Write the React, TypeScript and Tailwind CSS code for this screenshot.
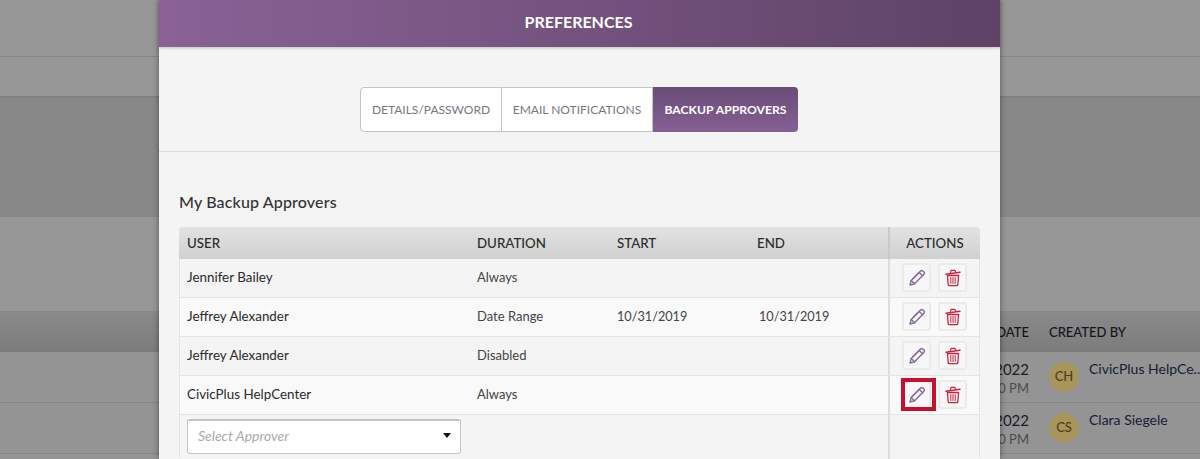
import React from "react";

const rows = [
  { user: "Jennifer Bailey", duration: "Always", start: "", end: "", bg: "bg-[#f4f4f4]" },
  { user: "Jeffrey Alexander", duration: "Date Range", start: "10/31/2019", end: "10/31/2019", bg: "bg-[#f9f9f9]" },
  { user: "Jeffrey Alexander", duration: "Disabled", start: "", end: "", bg: "bg-[#f4f4f4]" },
  { user: "CivicPlus HelpCenter", duration: "Always", start: "", end: "", bg: "bg-[#f9f9f9]", highlight: true },
];

const PencilIcon = () => (
  <svg width="18" height="18" viewBox="0 0 18 18" fill="none" stroke="#8a6a9c" strokeWidth="1.4" strokeLinejoin="round" strokeLinecap="round">
    <path d="M2 16l1.2-4.6L12.6 2c.7-.7 1.6-.7 2.2-.1l1.2 1.2c.6.6.6 1.5-.1 2.2L6.6 14.8z" />
    <path d="M3.2 11.4l3.4 3.4M11.2 3.4l3.4 3.4M4.6 10l6.8-6.8" />
  </svg>
);

const TrashIcon = () => (
  <svg width="18" height="18" viewBox="0 0 18 18" fill="none" stroke="#c9233f" strokeLinecap="round" strokeLinejoin="round">
    <path d="M2 5.2L16 3.2" strokeWidth="1.6" />
    <path d="M6.5 3.4L7.2 1.3h3.4l1 1.2" strokeWidth="1.2" />
    <path d="M3.4 6.5h11.2l-.8 9.2c-.1.7-.5 1-1.1 1H5.3c-.6 0-1-.3-1.1-1z" strokeWidth="1.3" />
    <path d="M6.8 8.5v6M9 8.5v6M11.2 8.5v6" strokeWidth="1" />
  </svg>
);

const ActionButton = ({ children, highlight }: { children: React.ReactNode; highlight?: boolean }) => (
  <span className="relative flex h-[29px] w-[29px] items-center justify-center rounded-[3px] border-2 border-[#ebebeb] bg-[#f7f7f7]">
    {children}
    {highlight && <span className="absolute -left-[3px] -top-[4px] h-[33px] w-[35px] border-[4px] border-[#c8102e]" />}
  </span>
);

const BackdropRow = ({ initials, name }: { initials: string; name: string }) => (
  <div className="flex h-[51px] shrink-0 border-b border-[#858585] bg-[#949494]">
    <div className="w-[1029px] shrink-0 pt-[7px] text-right text-[15px] leading-[20px] text-[#1a1a2a]">
      <div>10/12/2022</div>
      <div className="text-[13px] leading-[18px] text-[#4b4b4b]">12:00 PM</div>
    </div>
    <div className="ml-[20px] mt-[10px] flex h-[30px] w-[30px] shrink-0 items-center justify-center rounded-full bg-[#a8955c] text-[13px] font-medium text-[#4f3f12]">
      {initials}
    </div>
    <div className="ml-[10px] mt-[7px] whitespace-nowrap text-[14px] leading-[20px] text-[#151c33]">{name}</div>
  </div>
);

export default function App() {
  return (
    <div className="relative h-[459px] w-[1200px] overflow-hidden bg-[#949494] font-['Lato',sans-serif]">
      {/* page behind the dimmed overlay */}
      <div className="flex h-full flex-col">
        <div className="h-[57px] shrink-0 border-b border-[#868686] bg-[#979797]" />
        <div className="h-[41px] shrink-0 border-b-2 border-[#808080] bg-[#979797]" />
        <div className="h-[119px] shrink-0 bg-[#888888]" />
        <div className="h-[94px] shrink-0 bg-[#979797]" />
        <div className="flex h-[41px] shrink-0 items-center bg-gradient-to-b from-[#8a8a8a] to-[#7c7c7c] pt-[2px] text-[13px] font-medium text-[#14141c]">
          <span className="w-[1029px] shrink-0 text-right">DATE</span>
          <span className="ml-[20px]">CREATED BY</span>
        </div>
        <BackdropRow initials="CH" name="CivicPlus HelpCe.." />
        <BackdropRow initials="CS" name="Clara Siegele" />
        <div className="grow bg-[#949494]" />
      </div>

      {/* modal */}
      <div className="absolute left-[159px] top-0 flex h-full w-[841px] flex-col bg-[#f4f4f4] shadow-[0_0_6px_rgba(0,0,0,0.45)]">
        <div className="flex h-[47px] shrink-0 items-center justify-center bg-gradient-to-r from-[#8a6296] to-[#5e4366] pb-[3px] pr-[2px] text-[16px] font-bold text-white shadow-[0_1px_3px_rgba(90,60,100,0.3)]">
          PREFERENCES
        </div>

        <div className="flex h-[105px] shrink-0 items-start justify-center border-b border-[#dcdcdc] pr-[1px] pt-[40px]">
          <div className="flex h-[45px] text-[12px]">
            <span className="flex w-[142px] items-center justify-center rounded-l-[4px] border border-[#c4c4c4] bg-white pt-[1px] text-[#77777f]">DETAILS/PASSWORD</span>
            <span className="flex w-[151px] items-center justify-center border-y border-r border-[#c4c4c4] bg-white pt-[1px] text-[#77777f]">EMAIL NOTIFICATIONS</span>
            <span className="flex w-[145px] items-center justify-center rounded-r-[4px] bg-gradient-to-b from-[#694c78] to-[#866093] pt-[1px] text-[12.2px] font-bold text-white">BACKUP APPROVERS</span>
          </div>
        </div>

        <div className="px-[20px]">
          <h2 className="mt-[39px] h-[36px] text-[16px] font-medium leading-[22px] tracking-[0.15px] text-[#333333]">My Backup Approvers</h2>

          <div className="overflow-hidden rounded-[3px]">
            <div className="grid h-[32px] grid-cols-[298px_140px_140px_131px_1fr] items-center rounded-t-[3px] bg-gradient-to-b from-[#e2e2e2] to-[#d0d0d0] text-[13.3px] font-medium text-[#2b2b2b]">
              <span className="pl-[8px] pt-[1px]">USER</span>
              <span className="pt-[1px]">DURATION</span>
              <span className="pt-[1px]">START</span>
              <span className="pt-[1px]">END</span>
              <span className="flex h-full items-center justify-center border-l-[2px] border-[#c9c9c9] pt-[1px]">ACTIONS</span>
            </div>
            {rows.map((r, i) => (
              <div key={i} className={`grid h-[39px] grid-cols-[297px_140px_140px_131px_1fr] items-center border-x border-b border-[#e4e4e4] text-[13px] ${r.bg}`}>
                <span className="pb-[1px] pl-[7px] text-[13.4px] text-[#2b2b2b]">{r.user}</span>
                <span className="pb-[1px] text-[#444444]">{r.duration}</span>
                <span className="pb-[1px] text-[12.7px] text-[#444444]">{r.start}</span>
                <span className="pb-[1px] pl-[2px] text-[12.7px] text-[#444444]">{r.end}</span>
                <span className="flex h-full items-center justify-center gap-[7px] border-l-[2px] border-[#dddddd] pb-[1px]">
                  <ActionButton highlight={r.highlight}><PencilIcon /></ActionButton>
                  <ActionButton><TrashIcon /></ActionButton>
                </span>
              </div>
            ))}
            <div className="grid h-[44px] grid-cols-[708px_1fr] border-x border-[#e4e4e4] bg-[#f4f4f4]">
              <div className="pl-[7px] pt-[4px]">
                <div className="flex h-[35px] w-[274px] items-center justify-between rounded-[3px] border border-t-2 border-[#c4c4c4] bg-white pb-[3px] pl-[10px] pr-[9px] text-[14px] italic text-[#aaaaaa]">
                  Select Approver
                  <span className="h-0 w-0 border-x-[4.5px] border-t-[5px] border-x-transparent border-t-[#111111]" />
                </div>
              </div>
              <span className="border-l-[2px] border-[#dddddd]" />
            </div>
          </div>
        </div>
      </div>
    </div>
  );
}
